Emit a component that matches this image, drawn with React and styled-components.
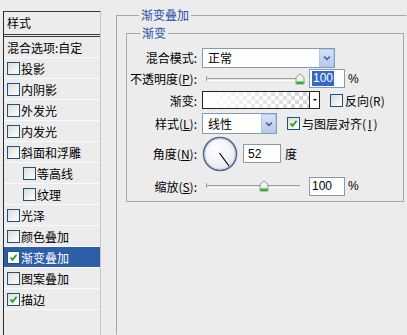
import React from "react";
import styled, { createGlobalStyle } from "styled-components";

const Global = createGlobalStyle`
  html, body { margin: 0; padding: 0; background: #ececec; overflow: hidden; }
  body {
    width: 407px; height: 335px;
    font-family: "Noto Sans CJK SC", "Liberation Sans", sans-serif;
    font-size: 12px; color: #000;
  }
`;

const Dialog = styled.div`
  display: flex;
  height: 335px;
  padding-left: 3px;
  box-sizing: border-box;
  overflow: hidden;
`;

// left column: list of layer styles
const StyleList = styled.div`
  width: 96px;
  flex-shrink: 0;
  margin-top: 11px;
  border-top: 1px solid #3a3a3a;
  border-left: 1px solid #2c2c2c;
  border-right: 1px solid #c6c6c6;
  background: #ececec;
`;

const ListHeader = styled.div`
  height: 22px;
  line-height: 22px;
  padding-left: 3px;
  border-bottom: 3px double #3a3a3a;
`;

const ListRow = styled.div`
  height: 20px;
  display: flex;
  align-items: center;
  gap: 1px;
  padding-left: ${(p) => (p.$sub ? 19 : 3)}px;
  border-bottom: 1px solid #fafafa;
  background: ${(p) => (p.$active ? "#2f5ea9" : "transparent")};
  color: ${(p) => (p.$active ? "#fff" : "#000")};
  white-space: nowrap;
`;

const Box = styled.span`
  width: 13px;
  height: 13px;
  box-sizing: border-box;
  flex-shrink: 0;
  border: 1px solid #1c5180;
  background: ${(p) => (p.$white ? "#fff" : "linear-gradient(135deg, #dcdcd7, #ffffff)")};
  display: flex;
  align-items: center;
  justify-content: center;
`;

const Check = ({ checked, white }) => (
  <Box $white={white}>
    {checked && (
      <svg width="9" height="9" viewBox="0 0 9 9">
        <path d="M1.5 4.5 L3.5 6.8 L7.6 1.8" fill="none" stroke="#21a121" strokeWidth="1.8" />
      </svg>
    )}
  </Box>
);

// right side: grouped options
const Main = styled.div`
  flex: 1;
  min-width: 0;
  padding-left: 15px;
  padding-top: 8px;
`;

const Group = styled.fieldset`
  margin: 0;
  padding: ${(p) => (p.$inner ? "7px 0 0 0" : "4px 0 0 9px")};
  width: ${(p) => (p.$inner ? "278px" : "100%")};
  height: ${(p) => (p.$inner ? "auto" : "327px")};
  box-sizing: border-box;
  border: 1px solid #a8a8a8;
  border-right-color: ${(p) => (p.$inner ? "#a8a8a8" : "transparent")};
  border-bottom-color: ${(p) => (p.$inner ? "#a8a8a8" : "transparent")};
  min-width: 0;
`;

const Legend = styled.legend`
  font-size: 12px;
  line-height: 14px;
  padding: 0 2px;
  margin-left: 13px;
  color: #1f4fa8;
`;

const Form = styled.div`
  display: grid;
  grid-template-columns: 70px 1fr;
  column-gap: 5px;
  grid-template-rows: 21px 21px 22px 25px 35px 30px;
  align-items: center;
`;

const Label = styled.div`
  text-align: right;
  white-space: nowrap;
`;

const Controls = styled.div`
  display: flex;
  align-items: center;
  white-space: nowrap;
`;

const Select = styled.div`
  width: ${(p) => p.$w}px;
  height: ${(p) => p.$h}px;
  box-sizing: border-box;
  border: 1px solid #7f9db9;
  background: #fff;
  display: flex;
  align-items: center;
  padding-left: 5px;
`;

const DropButton = styled.span`
  margin-left: auto;
  width: 15px;
  height: 100%;
  box-sizing: border-box;
  border: 1px solid #b4c6ea;
  background: linear-gradient(#d6e2fa, #b6c9ee);
  display: flex;
  align-items: center;
  justify-content: center;
`;

const Chevron = () => (
  <svg width="8" height="6" viewBox="0 0 8 6">
    <path d="M1 1.5 L4 4.3 L7 1.5" fill="none" stroke="#4d6185" strokeWidth="1.6" />
  </svg>
);

const Slider = styled.div`
  position: relative;
  width: 94px;
  height: 14px;
  margin-left: 4px;
  margin-right: 9px;
  &::before {
    content: "";
    position: absolute;
    left: 0; right: 0; top: 6px;
    height: 1px;
    border-top: 1px solid #a0a0a0;
    border-bottom: 1px solid #fff;
    background: #e4e4e4;
  }
  &::after {
    content: "";
    position: absolute;
    left: 0; top: 4px;
    width: 1px; height: 5px;
    background: #a0a0a0;
  }
`;

const Thumb = styled.svg`
  position: absolute;
  top: 1px;
  margin-left: -5px;
  z-index: 1;
`;

const Field = styled.div`
  width: ${(p) => p.$w}px;
  height: 19px;
  box-sizing: border-box;
  border: 1px solid #7f9db9;
  background: #fff;
  display: flex;
  align-items: center;
  padding-left: ${(p) => p.$pad || 2}px;
  margin-left: ${(p) => p.$gap || 0}px;
  font-family: "Liberation Sans", sans-serif;
  font-size: 12px;
`;

const Picked = styled.span`
  background: #316ac5;
  color: #fff;
  padding: 0 1px;
  line-height: 15px;
`;

const Unit = styled.span`
  margin-left: ${(p) => p.$gap || 3}px;
  font-family: ${(p) => (p.$latin ? '"Liberation Sans", sans-serif' : "inherit")};
`;

const Gradient = styled.div`
  width: 118px;
  height: 18px;
  box-sizing: border-box;
  border: 1px solid #222;
  display: flex;
`;

const Swatch = styled.div`
  flex: 1;
  background:
    linear-gradient(to right, #fff, rgba(255, 255, 255, 0)),
    repeating-conic-gradient(#d4d4d4 0 25%, #fff 0 50%) 0 0 / 8px 8px;
`;

const SmallDrop = styled.div`
  width: 9px;
  border-left: 1px solid #222;
  background: #fff;
  display: flex;
  align-items: center;
  justify-content: center;
  &::before {
    content: "";
    border-left: 2px solid transparent;
    border-right: 2px solid transparent;
    border-top: 2px solid #000;
  }
`;

const CheckLabel = styled.label`
  display: flex;
  align-items: center;
  gap: 2px;
  margin-left: 10px;
`;

const SliderThumb = ({ pct }) => (
  <Thumb width="10" height="12" viewBox="0 0 10 12" style={{ left: `${pct}%` }}>
    <path d="M1 4.5 L5 0.8 L9 4.5 L9 11 L1 11 Z" fill="#f2f2ee" stroke="#8f968f" />
    <rect x="1.5" y="8.5" width="7" height="2.5" fill="#30b030" />
  </Thumb>
);

const Dial = () => (
  <svg width="36" height="36" viewBox="0 0 36 36">
    <defs>
      <radialGradient id="dialFill" cx="0.4" cy="0.35" r="0.7">
        <stop offset="0" stopColor="#ffffff" />
        <stop offset="1" stopColor="#e6e9f0" />
      </radialGradient>
    </defs>
    <circle cx="18" cy="18" r="16.5" fill="url(#dialFill)" stroke="#53678f" strokeWidth="1.6" />
    <circle cx="18" cy="18" r="15" fill="none" stroke="#c3cde0" strokeWidth="0.8" />
    <line x1="17.5" y1="17" x2="27" y2="30" stroke="#000" strokeWidth="1.2" />
  </svg>
);

const styles = [
  { label: "投影" },
  { label: "内阴影" },
  { label: "外发光" },
  { label: "内发光" },
  { label: "斜面和浮雕" },
  { label: "等高线", sub: true },
  { label: "纹理", sub: true },
  { label: "光泽" },
  { label: "颜色叠加" },
  { label: "渐变叠加", checked: true, active: true },
  { label: "图案叠加" },
  { label: "描边", checked: true },
];

export default function App() {
  return (
    <>
      <Global />
      <Dialog>
        <StyleList>
          <ListHeader>样式</ListHeader>
          <ListRow>混合选项:自定</ListRow>
          {styles.map((s) => (
            <ListRow key={s.label} $sub={s.sub} $active={s.active}>
              <Check checked={s.checked} white={s.active} />
              {s.label}
            </ListRow>
          ))}
        </StyleList>

        <Main>
          <Group>
            <Legend>渐变叠加</Legend>
            <Group $inner>
              <Legend>渐变</Legend>
              <Form>
                <Label>混合模式:</Label>
                <Controls>
                  <Select $w={133} $h={20}>
                    正常
                    <DropButton><Chevron /></DropButton>
                  </Select>
                </Controls>

                <Label>不透明度(<u>P</u>):</Label>
                <Controls>
                  <Slider><SliderThumb pct={100} /></Slider>
                  <Field $w={36}><Picked>100</Picked></Field>
                  <Unit $latin>%</Unit>
                </Controls>

                <Label>渐变:</Label>
                <Controls>
                  <Gradient>
                    <Swatch />
                    <SmallDrop />
                  </Gradient>
                  <CheckLabel>
                    <Check />
                    反向(R)
                  </CheckLabel>
                </Controls>

                <Label>样式(<u>L</u>):</Label>
                <Controls>
                  <Select $w={75} $h={21}>
                    线性
                    <DropButton><Chevron /></DropButton>
                  </Select>
                  <CheckLabel>
                    <Check checked />
                    与图层对齐(<u>I</u>)
                  </CheckLabel>
                </Controls>

                <Label>角度(<u>N</u>):</Label>
                <Controls>
                  <Dial />
                  <Field $w={38} $gap={5} $pad={4}>52</Field>
                  <Unit $gap={4}>度</Unit>
                </Controls>

                <Label>缩放(<u>S</u>):</Label>
                <Controls>
                  <Slider><SliderThumb pct={62} /></Slider>
                  <Field $w={36}>100</Field>
                  <Unit $latin>%</Unit>
                </Controls>
              </Form>
            </Group>
          </Group>
        </Main>
      </Dialog>
    </>
  );
}
